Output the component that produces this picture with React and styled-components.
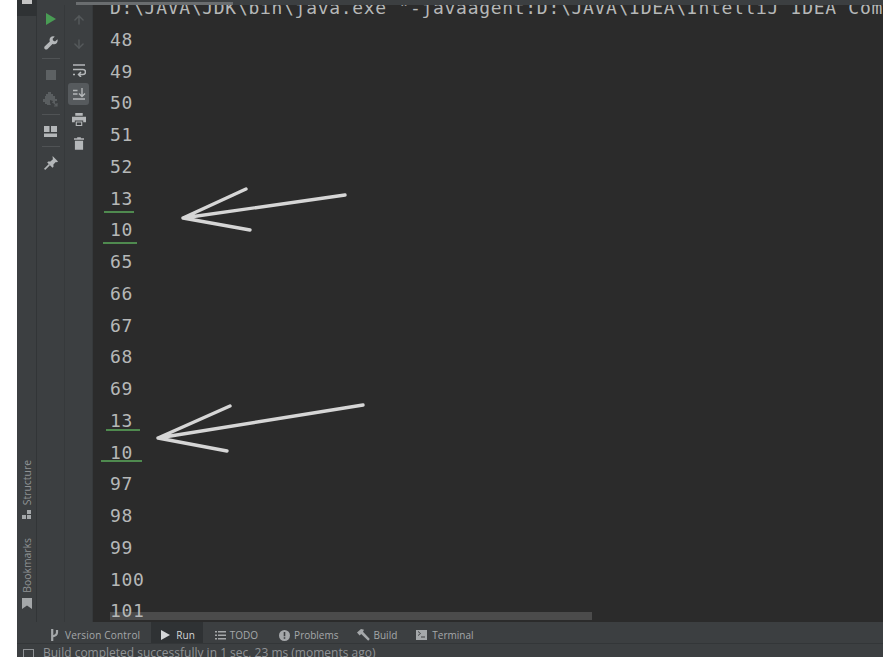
import React from "react";
import styled, { createGlobalStyle } from "styled-components";
import { ArrowUp, ArrowDown } from "lucide-react";

const Global = createGlobalStyle`
  html, body { margin: 0; padding: 0; width: 883px; height: 657px; overflow: hidden; background: #fff; }
`;
const Page = styled.div`
  width: 883px; height: 657px; display: flex; padding-left: 17px; box-sizing: border-box;
  background: #fff; overflow: hidden; font-family: "Open Sans", "Noto Sans", sans-serif;
`;
const Window = styled.div`
  flex: 1; min-width: 0; display: flex; flex-direction: column; background: #3c3f41;
`;
const TopBar = styled.div`
  height: 5px; flex: none; background: #3c3f41; display: flex; position: relative;
`;
const TopSlot = styled.div`
  width: 20px; background: #2f3234; display: flex; justify-content: center;
`;
const TopSquare = styled.div`
  width: 10px; height: 4px; background: #c4c4c4;
`;
const TopThumb = styled.div`
  width: 157px; height: 3px; margin: 2px 0 0 39px; background: #6a6d6f;
`;
const Body = styled.div`
  flex: 1; min-height: 0; display: flex;
`;
const Stripe = styled.div`
  width: 20px; flex: none; display: flex; flex-direction: column; justify-content: flex-end;
  align-items: center; gap: 19px; padding-bottom: 13px; box-sizing: border-box; background: #3c3f41;
  border-right: 1px solid #323537;
`;
const StripeCap = styled.div`
  position: absolute; left: 17px; top: 5px; width: 20px; height: 11px; background: #2f3234;
`;
const StripeItem = styled.div`
  display: flex; flex-direction: column-reverse; align-items: center; gap: 5px; color: #a4a7a9;
`;
const VerticalLabel = styled.span`
  writing-mode: vertical-rl; transform: rotate(180deg); font-size: 10.4px; line-height: 12px; color: #8f9294;
`;
const ActionCol = styled.div`
  width: 28px; flex: none; display: flex; flex-direction: column; align-items: center;
  box-sizing: border-box; padding-top: ${p => p.$top}px; background: #3c3f41;
  border-right: 1px solid #36393b;
`;
const ActionBtn = styled.div`
  width: 21px; height: ${p => p.$h || 24}px; display: flex; align-items: center; justify-content: center;
  border-radius: 3px; background: ${p => (p.$active ? "#565a5d" : "transparent")};
  color: ${p => p.$color || "#b4b7b9"};
`;
const Sep = styled.div`
  width: 18px; height: 1px; background: #505355; margin: 3px 0 4px;
`;
const Editor = styled.div`
  flex: 1; min-width: 0; position: relative; overflow: hidden; background: #2b2b2b;
  font-family: "DejaVu Sans Mono", monospace; font-size: 18px; letter-spacing: 0.7px; color: #b6b8b8;
`;
const Lines = styled.div`
  position: relative; margin-top: -13px; padding-left: 17px; white-space: pre;
`;
const Line = styled.div`
  height: 31.75px; line-height: 31.75px;
`;
const Scrollbar = styled.div`
  position: absolute; left: 17px; bottom: 2px; width: 482px; height: 8px; background: #4b4b4b;
`;
const Drawing = styled.svg`
  position: absolute; left: 0; top: 0; width: 790px; height: 617px; pointer-events: none;
`;
const ToolBar = styled.div`
  height: 21px; flex: none; display: flex; align-items: stretch; padding-left: 23px;
  background: #3c3f41; font-size: 10px; color: #a5a8aa; box-sizing: border-box;
`;
const Tab = styled.div`
  display: flex; align-items: center; gap: ${p => p.$gap}px;
  padding: 5px ${p => p.$pr}px 0 ${p => p.$pl}px;
  background: ${p => (p.$active ? "#2f3234" : "transparent")};
  color: ${p => (p.$active ? "#d4d6d8" : "#a5a8aa")};
`;
const WideLabel = styled.span`
  letter-spacing: 0.2px;
`;
const StatusBar = styled.div`
  height: 14px; flex: none; display: flex; gap: 9px; padding-left: 6px; background: #3c3f41;
  font-size: 12px; line-height: 18px; color: #909396; overflow: hidden; white-space: nowrap;
  border-top: 1px solid #333638; box-sizing: border-box;
`;
const StatusBox = styled.div`
  width: 11px; height: 12px; margin-top: 5px; border: 1px solid #909396; box-sizing: border-box; flex: none;
`;

const lines = ["D:\\JAVA\\JDK\\bin\\java.exe \"-javaagent:D:\\JAVA\\IDEA\\IntelliJ IDEA Com", "48", "49", "50", "51", "52", "13", "10", "65", "66", "67", "68", "69", "13", "10", "97", "98", "99", "100", "101"];

const Wrap = () => (
  <svg width="14" height="14" viewBox="0 0 14 14" fill="none" stroke="currentColor" strokeWidth="1.5">
    <path d="M1 2h12M1 6.5h10a2.2 2.2 0 0 1 0 5H7M9 9l-2.5 2.5L9 14M1 11.5h2" />
  </svg>
);
const Scroll = () => (
  <svg width="14" height="12" viewBox="0 0 14 12" fill="none" stroke="currentColor" strokeWidth="1.4">
    <path d="M1 2.5h4.5M1 6h4.5M1 11h12M10 0v8M7 5.5L10 8.5 13 5.5" />
  </svg>
);
const Printer = () => (
  <svg width="14" height="14" viewBox="0 0 15 15" fill="currentColor">
    <path d="M3.5 0h8v3h-8zM0 4h15v6h-3V8H3v2H0zM4 9h7v5H4zM5.2 10.2v2.6h4.6v-2.6z" fillRule="evenodd" />
  </svg>
);
const Trash = () => (
  <svg width="10" height="13" viewBox="0 0 11 14" fill="currentColor">
    <path d="M3.5 0h4v1.2h3.5v1.6H0V1.2h3.5zM1 4h9v10H1z" />
  </svg>
);
const WrenchIcon = () => (
  <svg width="14" height="14" viewBox="0 0 14 14">
    <path d="M13.5 3.2L11 5.4 9 4.6 8.6 2.8 10.8.6Q8.4-.4 6.6 1.2 5 2.9 5.8 5.4L.6 10.6Q-.2 11.8.8 13 2 14 3.3 13.2L8.5 8Q11 8.8 12.6 7.2 14 5.6 13.5 3.2z" fill="currentColor" />
  </svg>
);
const PinIcon = () => (
  <svg width="14" height="14" viewBox="0 0 14 14">
    <path d="M8.6 0L14 5.4l-1 .9-1.2-.2L9.4 8.6l.1 2.2-1 1-5.3-5.3 1-1 2.2.1L8.9 3.2 8.7 2z" fill="currentColor" />
    <path d="M5.4 8.6L.6 13.4" stroke="currentColor" strokeWidth="1.6" />
  </svg>
);
const Stop = () => <svg width="10" height="10"><rect width="10" height="10" fill="#5d6163" /></svg>;
const Bug = () => (
  <svg width="15" height="15" viewBox="0 0 15 15" fill="#5a5e60">
    <path d="M5 0h3v2h2v2h2v3h2v2h-2v2H9l1-2-3-1v3l1 2H4v-1H2v-2H0V7h2V4h1V2h2z" />
    <path d="M10 10l4 4M14 11v3h-3" stroke="#5a5e60" fill="none" strokeWidth="1.2" />
  </svg>
);
const Layout = () => (
  <svg width="13" height="11" viewBox="0 0 13 11" fill="currentColor">
    <path d="M0 0h5.5v6H0zM7 0h6v6H7zM0 7.5h13V11H0z" />
  </svg>
);
const Play = () => <svg width="10" height="12"><path d="M0 0l10 6-10 6z" fill="#499c54" /></svg>;
const StructureIcon = () => (
  <svg width="10" height="9" fill="currentColor"><path d="M0 5h4v4H0zM5 5h4v4H5zM5 0h4v4H5z" /></svg>
);
const BookmarkFlag = () => (
  <svg width="10" height="11" fill="currentColor"><path d="M0 0h10v11L5 7.5 0 11z" /></svg>
);
const Branch = () => (
  <svg width="9" height="12" viewBox="0 0 9 12" fill="none" stroke="currentColor" strokeWidth="2.2">
    <path d="M2.2 0v12M7 1v2.5Q7 6.5 2.2 7.5" />
  </svg>
);
const Triangle = () => <svg width="9" height="10"><path d="M0 0l9 5-9 5z" fill="currentColor" /></svg>;
const ListIcon = () => (
  <svg width="11" height="9" fill="currentColor"><path d="M0 0h2v1.6H0zM3 0h8v1.6H3zM0 3.5h2v1.6H0zM3 3.5h8v1.6H3zM0 7h2v1.6H0zM3 7h8v1.6H3z" /></svg>
);
const ProblemIcon = () => (
  <svg width="11" height="11" viewBox="0 0 11 11">
    <circle cx="5.5" cy="5.5" r="5.5" fill="currentColor" />
    <path d="M4.7 2h1.6v4.2H4.7zM4.7 7.2h1.6v1.6H4.7z" fill="#3c3f41" />
  </svg>
);
const HammerIcon = () => (
  <svg width="13" height="12" viewBox="0 0 13 12" fill="currentColor">
    <path d="M0 3.5L4 0l3 .8-1 2L12.8 10 11.2 11.8 4.2 5 2.6 6.5z" />
  </svg>
);
const TermIcon = () => (
  <svg width="11" height="10" viewBox="0 0 11 10"><path fillRule="evenodd" fill="currentColor" d="M0 0h11v10H0zM2 2l2 1.5L2 5v1l3-2.5L2 1zM5 6.5v1h4v-1z" /></svg>
);

const Arrow = ({ d }) => (
  <path d={d} fill="none" stroke="#d6d6d6" strokeWidth="3.4" strokeLinecap="round" strokeLinejoin="round" />
);
const Squiggle = ({ x1, x2, y }) => (
  <path d={`M${x1} ${y}H${x2}`} stroke="#4f8a4f" strokeWidth="2" />
);

export default function App() {
  return (
    <Page>
      <Global />
      <Window>
        <TopBar>
          <TopSlot><TopSquare /></TopSlot>
          <TopThumb />
        </TopBar>
        <StripeCap />
        <Body>
          <Stripe>
            <StripeItem>
              <StructureIcon />
              <VerticalLabel>Structure</VerticalLabel>
            </StripeItem>
            <StripeItem>
              <BookmarkFlag />
              <VerticalLabel>Bookmarks</VerticalLabel>
            </StripeItem>
          </Stripe>
          <ActionCol $top={2}>
            <ActionBtn><Play /></ActionBtn>
            <ActionBtn><WrenchIcon /></ActionBtn>
            <Sep />
            <ActionBtn><Stop /></ActionBtn>
            <ActionBtn><Bug /></ActionBtn>
            <Sep />
            <ActionBtn><Layout /></ActionBtn>
            <Sep />
            <ActionBtn><PinIcon /></ActionBtn>
          </ActionCol>
          <ActionCol $top={3}>
            <ActionBtn $color="#55595b"><ArrowUp size={14} strokeWidth={2.5} /></ActionBtn>
            <ActionBtn $color="#55595b"><ArrowDown size={14} strokeWidth={2.5} /></ActionBtn>
            <ActionBtn $h={27}><Wrap /></ActionBtn>
            <ActionBtn $h={22} $active><Scroll /></ActionBtn>
            <ActionBtn $h={30}><Printer /></ActionBtn>
            <ActionBtn $h={16}><Trash /></ActionBtn>
          </ActionCol>
          <Editor>
            <Scrollbar />
            <Lines>
              {lines.map((l, i) => <Line key={i}>{l}</Line>)}
            </Lines>
            <Drawing viewBox="0 0 790 617">
              <Squiggle x1={11} x2={41} y={207} />
              <Squiggle x1={10} x2={44} y={238} />
              <Squiggle x1={13} x2={47} y={425} />
              <Squiggle x1={8} x2={49} y={456} />
              <Arrow d="M153 184L90 213L157 225M90 213L252 190" />
              <Arrow d="M137 401L65 433L134 446M65 433L270 400" />
            </Drawing>
          </Editor>
        </Body>
        <ToolBar>
          <Tab $pl={10} $pr={11} $gap={6}><Branch /><WideLabel>Version Control</WideLabel></Tab>
          <Tab $active $pl={10} $pr={8} $gap={6}><Triangle /><span>Run</span></Tab>
          <Tab $pl={12} $pr={10} $gap={4}><ListIcon /><span>TODO</span></Tab>
          <Tab $pl={11} $pr={9} $gap={4}><ProblemIcon /><span>Problems</span></Tab>
          <Tab $pl={9} $pr={9} $gap={4}><HammerIcon /><span>Build</span></Tab>
          <Tab $pl={10} $pr={10} $gap={5}><TermIcon /><span>Terminal</span></Tab>
        </ToolBar>
        <StatusBar>
          <StatusBox />
          <span>Build completed successfully in 1 sec, 23 ms (moments ago)</span>
        </StatusBar>
      </Window>
    </Page>
  );
}
